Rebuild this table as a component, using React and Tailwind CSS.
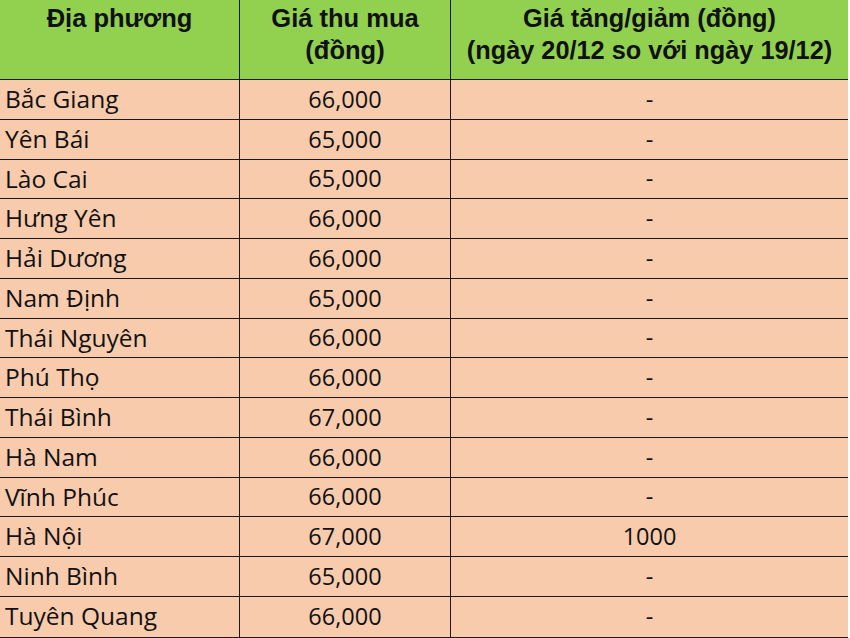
import React from "react";

const rows = [
  ["Bắc Giang", "66,000", "-"],
  ["Yên Bái", "65,000", "-"],
  ["Lào Cai", "65,000", "-"],
  ["Hưng Yên", "66,000", "-"],
  ["Hải Dương", "66,000", "-"],
  ["Nam Định", "65,000", "-"],
  ["Thái Nguyên", "66,000", "-"],
  ["Phú Thọ", "66,000", "-"],
  ["Thái Bình", "67,000", "-"],
  ["Hà Nam", "66,000", "-"],
  ["Vĩnh Phúc", "66,000", "-"],
  ["Hà Nội", "67,000", "1000"],
  ["Ninh Bình", "65,000", "-"],
  ["Tuyên Quang", "66,000", "-"],
];

export default function App() {
  return (
    <div className="w-[850px] h-[638px] bg-white overflow-hidden">
      <div className="w-[848px] grid grid-cols-[240px_211px_397px] border-r border-b border-[#1a1a1a] text-[#111]">
        <div className="h-[80px] bg-[#92d050] border-r border-b border-[#1a1a1a] text-center font-bold text-[25.5px] leading-[32px] pt-[2px] font-['Liberation_Sans',Arial,sans-serif]">
          Địa phương
        </div>
        <div className="h-[80px] bg-[#92d050] border-r border-b border-[#1a1a1a] text-center font-bold text-[25.5px] leading-[32px] pt-[2px] font-['Liberation_Sans',Arial,sans-serif]">
          Giá thu mua
          <br />
          (đồng)
        </div>
        <div className="h-[80px] bg-[#92d050] border-b border-[#1a1a1a] text-center font-bold text-[25.3px] leading-[32px] pt-[2px] font-['Liberation_Sans',Arial,sans-serif]">
          Giá tăng/giảm (đồng)
          <br />
          (ngày 20/12 so với ngày 19/12)
        </div>
        {rows.map((r, i) => (
          <React.Fragment key={i}>
            <div className={`h-[39.77px] bg-[#f8cbad] border-r border-[#1a1a1a] ${i < rows.length - 1 ? "border-b" : ""} flex items-center pl-[5px] text-[24.5px] font-['Open_Sans','Noto_Sans',sans-serif]`}>
              {r[0]}
            </div>
            <div className={`h-[39.77px] bg-[#f8cbad] border-r border-[#1a1a1a] ${i < rows.length - 1 ? "border-b" : ""} flex items-center justify-center text-[23.5px] font-['Open_Sans','Noto_Sans',sans-serif]`}>
              {r[1]}
            </div>
            <div className={`h-[39.77px] bg-[#f8cbad] border-[#1a1a1a] ${i < rows.length - 1 ? "border-b" : ""} flex items-center justify-center text-[23.5px] font-['Open_Sans','Noto_Sans',sans-serif]`}>
              {r[2]}
            </div>
          </React.Fragment>
        ))}
      </div>
    </div>
  );
}
